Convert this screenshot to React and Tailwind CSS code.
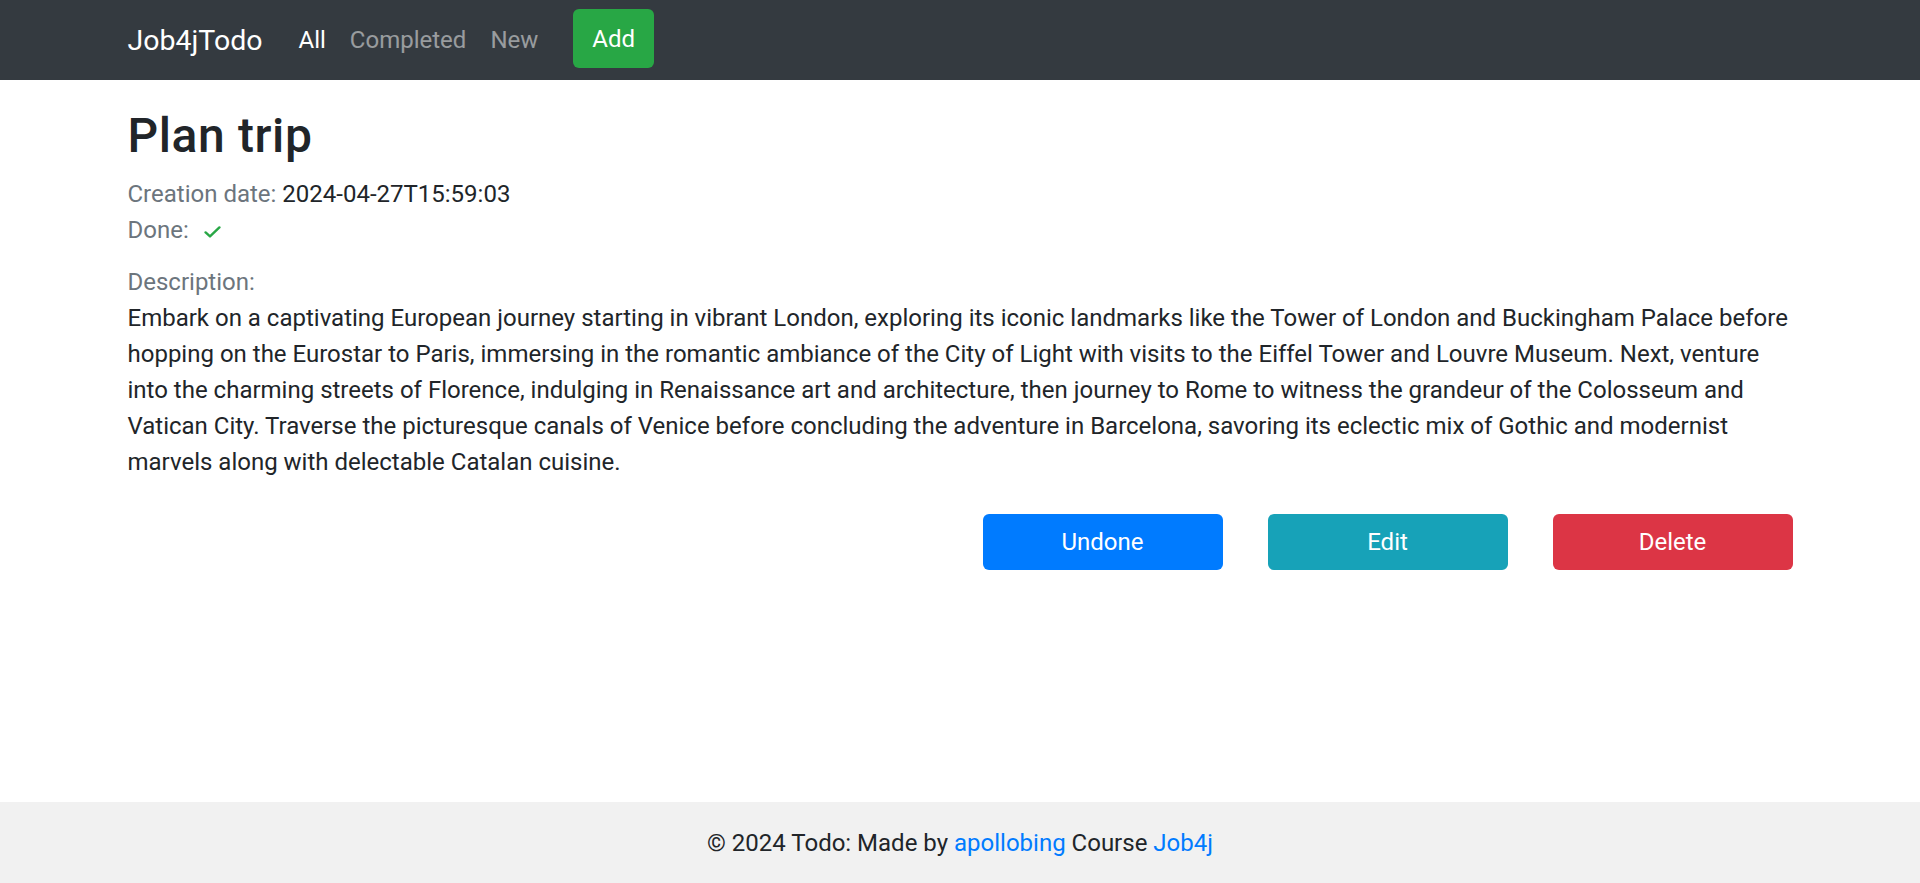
import React from "react";

export default function App() {
  return (
    <div className="min-h-screen flex flex-col bg-white text-[#212529] font-['Roboto',sans-serif] text-[24px] leading-[36px]">
      <nav className="h-[80px] bg-[#343a40] shrink-0">
        <div className="w-[1710px] mx-auto px-[22.5px] h-full flex items-center">
          <a className="text-white text-[28.5px] leading-[45px] mr-[24px]" href="#">Job4jTodo</a>
          <div className="flex items-center">
            <a className="px-[12px] text-white" href="#">All</a>
            <a className="px-[12px] text-[rgba(255,255,255,0.5)]" href="#">Completed</a>
            <a className="px-[12px] text-[rgba(255,255,255,0.5)]" href="#">New</a>
          </div>
          <button className="ml-[23px] mb-[3px] h-[59px] px-[19px] rounded-[6px] bg-[#28a745] text-white leading-[36px]">Add</button>
        </div>
      </nav>

      <main className="w-[1710px] mx-auto px-[22.5px]">
        <h2 className="mt-[27px] mb-[11px] text-[48px] leading-[57.6px] font-medium tracking-[0.6px]">Plan trip</h2>
        <div>
          <span className="text-[#6c757d]">Creation date: </span>
          <span>2024-04-27T15:59:03</span>
        </div>
        <div className="flex items-center">
          <span className="text-[#6c757d]">Done:</span>
          <svg className="ml-[15px] mt-[4px]" width="17" height="12" viewBox="0 0 17 12" fill="none">
            <path d="M1.6 6.4 L6 10.4 L15.4 1.4" stroke="#28a745" strokeWidth="2.4" strokeLinecap="round" strokeLinejoin="round" />
          </svg>
        </div>
        <div className="mt-[16px] text-[#6c757d]">Description:</div>
        <p>
          Embark on a captivating European journey starting in vibrant London, exploring its iconic landmarks like the Tower of London and Buckingham Palace before hopping on the Eurostar to Paris, immersing in the romantic ambiance of the City of Light with visits to the Eiffel Tower and Louvre Museum. Next, venture into the charming streets of Florence, indulging in Renaissance art and architecture, then journey to Rome to witness the grandeur of the Colosseum and Vatican City. Traverse the picturesque canals of Venice before concluding the adventure in Barcelona, savoring its eclectic mix of Gothic and modernist
          <br />
          marvels along with delectable Catalan cuisine.
        </p>
        <div className="mt-[34px] flex justify-end gap-[45px]">
          <button className="w-[240px] h-[56px] rounded-[6px] bg-[#007bff] text-white">Undone</button>
          <button className="w-[240px] h-[56px] rounded-[6px] bg-[#17a2b8] text-white">Edit</button>
          <button className="w-[240px] h-[56px] rounded-[6px] bg-[#dc3545] text-white">Delete</button>
        </div>
      </main>

      <footer className="mt-auto h-[81px] shrink-0 bg-[#f1f1f1] flex items-center justify-center">
        <span>
          © 2024 Todo: Made by <a className="text-[#007bff]" href="#">apollobing</a> Course <a className="text-[#007bff]" href="#">Job4j</a>
        </span>
      </footer>
    </div>
  );
}
